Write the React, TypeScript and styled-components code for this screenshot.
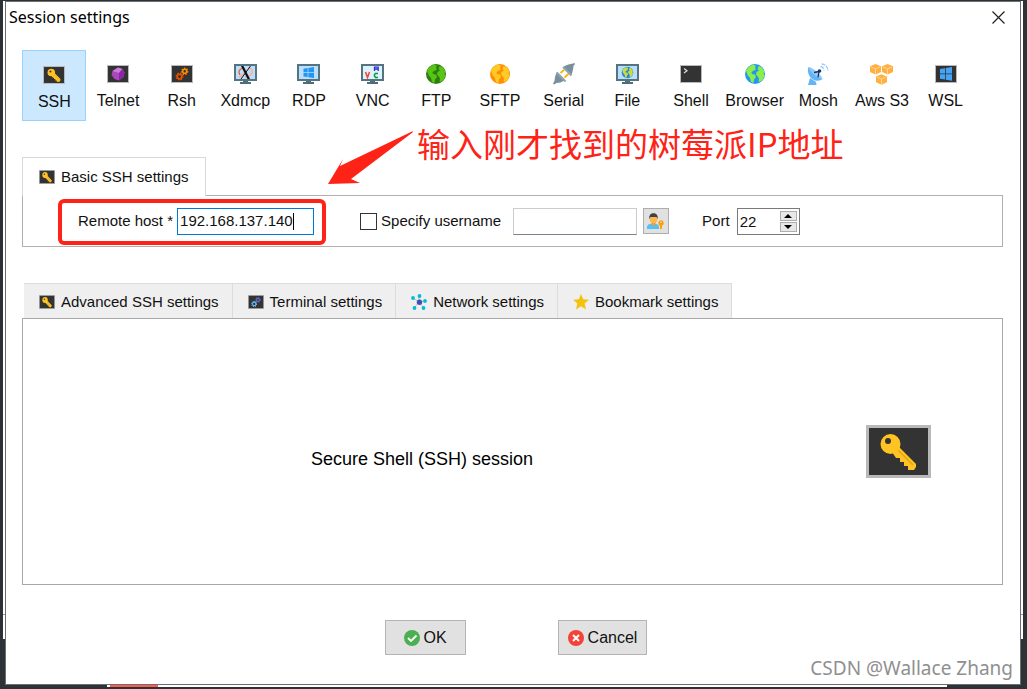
import React from 'react';
import styled, { createGlobalStyle } from 'styled-components';

const Global = createGlobalStyle`
  *, *::before, *::after { box-sizing: border-box; }
  body { margin: 0; background: #2d3236; color: #111; font: 15px/20px "Liberation Sans", Arial, sans-serif; }
  button, input { font: inherit; color: inherit; margin: 0; padding: 0; border-radius: 0; }
  svg { display: block; flex: none; }
`;

/* ---------- icons ---------- */

type Size = { w?: number; h?: number };

const KeyIcon = ({ w = 22, h = 18 }: Size) => (
  <svg width={w} height={h} viewBox="0 0 65 53" preserveAspectRatio="none">
    <rect width="65" height="53" fill="#b9b9b9" />
    <rect x="3" y="3" width="59" height="47" fill="#333" />
    <path d="M33 22L50 39V42L48 45H42V41H38V37H34V33H30L26 27Z" fill="#ffc423" stroke="#ffc423" strokeWidth={w < 30 ? 3 : 0} />
    <path d="M32 25l15 15" stroke="#e3a614" strokeWidth="1.500" />
    <circle cx="24.500" cy="19" r={w < 30 ? 11 : 10} fill="#ffc423" />
    <circle cx="22" cy="16" r="3" fill="#333" />
  </svg>
);

const Screen = ({ children, w = 22, h = 18 }: Size & { children?: React.ReactNode }) => (
  <svg width={w} height={h} viewBox="0 0 22 18" preserveAspectRatio="none">
    <rect width="22" height="18" fill="#b9b9b9" />
    <rect x="1" y="1" width="20" height="16" fill="#333" />
    {children}
  </svg>
);

const Monitor = ({ children }: { children: React.ReactNode }) => (
  <svg width="23" height="20" viewBox="0 0 23 20">
    <path d="M9 16h5v2h3v2H6v-2h3z" fill="#4f6d7a" />
    <rect width="23" height="17" fill="#557481" />
    <rect x="2" y="2" width="19" height="13" fill="#bbdefb" />
    {children}
  </svg>
);

const Land = ({ fill }: { fill: string }) => (
  <path
    fill={fill}
    d="M1 6.500C2.500 3.500 5 1.500 8 .8l3 1-1 2 1 1.700-3 1.500-1.500 1.300.5 1.700 3 .5 1 2.500-2 2.500-.5 3.500-2.500-1-1-4-2.500-3zM13.500 2l3 1 3 4.500-1 1.500 1 3-2 4-3 2-1-.8.500-3-1.500-2-1.500-1.700.5-2.500 2.500-1.500-1.500-1.500z"
  />
);

const Globe = ({ sea, land }: { sea: string; land: string }) => (
  <svg width="20" height="20" viewBox="0 0 20 20">
    <circle cx="10" cy="10" r="10" fill={sea} />
    <Land fill={land} />
  </svg>
);

const Gear = ({ cx, cy, r, color }: { cx: number; cy: number; r: number; color: string }) => (
  <g fill="none" stroke={color}>
    <circle cx={cx} cy={cy} r={r} strokeWidth="1.600" />
    <circle cx={cx} cy={cy} r={r + 1} strokeWidth="1.400" strokeDasharray="1.400 1.200" />
  </g>
);

const GearsIcon = ({ big, small, w, h }: Size & { big: string; small: string }) => (
  <Screen w={w} h={h}>
    <Gear cx={8.5} cy={11.5} r={2.3} color={big} />
    <Gear cx={13.7} cy={6.3} r={2} color={small} />
  </Screen>
);

const TelnetIcon = () => (
  <Screen>
    <path d="M11 2.500l4.500 1.500 2 3.500-1 4.500-4.500 3.500-4.500-1.500L4.500 10l1-4z" fill="#ab47bc" />
    <path d="M11 2.500l4.500 1.500-3.500 4-6.500-2z" fill="#c77dd6" />
    <path d="M15.500 4l2 3.500-1 4.500-4.500 3.500V8z" fill="#8e24aa" />
  </Screen>
);

const XIcon = () => (
  <Monitor>
    <path d="M14 4c4 0 5 2 4 5s-5 4-7 4M5 13c2 0 5-4 8-7" stroke="#ffab91" strokeWidth="1.500" fill="none" />
    <path d="M9 4C5 5 4 8 6 11" stroke="#f4511e" strokeWidth="1.200" fill="none" />
    <path d="M7 2h2.500l6.500 13h-2.500z" fill="#111" />
    <path d="M16.500 2L7 15" stroke="#111" strokeWidth="1" />
  </Monitor>
);

const RdpIcon = () => (
  <Monitor>
    <path d="M6.500 4.700l4.200-.7v4.200H6.500zM11.400 3.900L17 3v5.200h-5.600zM6.500 8.900h4.200v4.200l-4.200-.7zM11.400 8.900H17V14l-5.600-.8z" fill="#2196f3" />
  </Monitor>
);

const VncIcon = () => (
  <Monitor>
    <rect x="2" y="2" width="19" height="13" fill="#e1f0fd" />
    <path d="M4.500 8l2 5.500 2-5.500" stroke="#f44336" strokeWidth="1.500" fill="none" />
    <path d="M13.500 7V3.200h3.700V7M13.500 5h3.700" stroke="#3030e0" strokeWidth="1.300" fill="none" />
    <path d="M17 9.500h-2.500l-1 1v1.500l1 1.500H17" stroke="#00a030" strokeWidth="1.500" fill="none" />
  </Monitor>
);

const FileIcon = () => (
  <Monitor>
    <circle cx="11.500" cy="8.500" r="5.800" fill="#1e88e5" />
    <g transform="translate(5.700 2.700) scale(.58)"><Land fill="#cddc39" /></g>
  </Monitor>
);

const SerialIcon = () => (
  <svg width="22" height="22" viewBox="0 0 22 22">
    <path d="M7.500 10l3.500-3M11.500 14.500l4-3.500" stroke="#ffb300" strokeWidth="1.800" />
    <path d="M10 5l1.500-2 4-1.500L20 .5l1.500-.5.5 1-1.500 2-.5 3.500-1 4-1.500 1.500z" fill="#78909c" />
    <path d="M4.500 9L3 11l-1 3-.5 4L0 20.500l1 1 2.500-1.500 4-.5 3-1.500 1.500-1.500z" fill="#78909c" />
    <path d="M10 4l8.500 8.500M3.500 9.500l9 9" stroke="#90a4ae" strokeWidth="2" />
  </svg>
);

const ShellIcon = () => (
  <Screen>
    <path d="M4 3.500l3 2.200-3 2.200" stroke="#ddd" strokeWidth="1.200" fill="none" />
  </Screen>
);

const MoshIcon = () => (
  <svg width="22" height="22" viewBox="0 0 22 22">
    <path d="M3 15l6 4 .5 3H1z" fill="#64b5f6" />
    <path d="M1.500 4C-.5 9 2.500 16 8 17.500c3.500.8 6.500-.5 7.500-1.500z" fill="#64b5f6" />
    <path d="M1.500 4C5 4 15 12 15.500 16 12 17 3 9 1.500 4z" fill="#90caf9" />
    <path d="M12 8.500L7 9.500M12 8.500l-1 6" stroke="#1a3468" strokeWidth="1.300" />
    <circle cx="12.500" cy="8" r="1.800" fill="#1a3468" />
    <path d="M13.500 3.500c2 .2 3.500 2 3.500 4M14.500.8c4 .4 6.500 3.400 6.500 7.200" stroke="#90caf9" strokeWidth="1.300" strokeDasharray="4 1" fill="none" />
  </svg>
);

const Cube = ({ x, y }: { x: number; y: number }) => (
  <g transform={`translate(${x} ${y})`}>
    <path d="M5.500 0L11 2.300V8l-5.500 2.600L0 8V2.300z" fill="#ffb040" />
    <path d="M1 2.900l4.500 2 4.500-2M5.500 4.900V10" stroke="#ffe0b2" strokeWidth=".8" fill="none" />
  </g>
);

const AwsIcon = () => (
  <svg width="23" height="21" viewBox="0 0 23 21">
    <Cube x={0} y={0} />
    <Cube x={12} y={0} />
    <Cube x={6} y={10.2} />
  </svg>
);

const WslIcon = () => (
  <Screen>
    <path d="M5 4l5-.8v5.300H5zM10.800 3l6.200-.9v6.400h-6.200zM5 9.300h5v5.300l-5-.8zM10.800 9.300H17v6.500l-6.200-1z" fill="#42a5f5" />
  </Screen>
);

const NetworkIcon = () => (
  <svg width="16" height="16" viewBox="0 0 16 16">
    <path d="M8 8L2 4M8 8V2M8 8l6-1M8 8l5 6M8 8l-5 6" stroke="#b0bec5" strokeWidth="1" />
    <g fill="#00bcd4">
      <circle cx="2" cy="4" r="1.900" /><circle cx="8.500" cy="2" r="1.900" /><circle cx="14" cy="7" r="1.900" />
      <circle cx="12.500" cy="14" r="1.900" /><circle cx="3.500" cy="14" r="1.900" />
    </g>
    <circle cx="8.500" cy="8.300" r="2.700" fill="#3f51b5" />
  </svg>
);

const StarIcon = () => (
  <svg width="16" height="16" viewBox="0 0 16 16">
    <path d="M8 0l2.200 5.300 5.800.5-4.400 3.800L13 15.500l-5-3.200-5 3.200 1.400-5.900L0 5.800l5.800-.5z" fill="#f4c20d" />
  </svg>
);

const UserKeyIcon = () => (
  <svg width="18" height="17" viewBox="0 0 18 17">
    <path d="M0 16v-2c0-2.500 3-3.500 6-3.500s6 1 6 3.500v2z" fill="#4fc3f7" />
    <path d="M4.500 8.500h4V12l-2 1-2-1z" fill="#f09a3a" />
    <ellipse cx="6.500" cy="6" rx="3.800" ry="4.300" fill="#ffb74d" />
    <path d="M2.300 6C1.800 2 4 .3 6.500.3S11.200 2 10.700 6L9.500 4h-6z" fill="#424242" />
    <path d="M14 7.300a2.800 2.800 0 0 1 1 5.400V16h-2v-3.300a2.800 2.800 0 0 1 1-5.400z" fill="#ffa000" />
    <circle cx="14" cy="9.300" r=".8" fill="#e1e1e1" />
  </svg>
);

const OkIcon = () => (
  <svg width="16" height="16" viewBox="0 0 16 16">
    <circle cx="8" cy="8" r="8" fill="#4caf50" />
    <path d="M4 8l3 3 5.500-5.500" stroke="#fff" strokeWidth="1.800" fill="none" />
  </svg>
);

const CancelIcon = () => (
  <svg width="16" height="16" viewBox="0 0 16 16">
    <circle cx="8" cy="8" r="8" fill="#f44336" />
    <path d="M5 5l6 6M11 5l-6 6" stroke="#fff" strokeWidth="2" />
  </svg>
);

/* ---------- layout ---------- */

const Desktop = styled.div`
  position: relative;
  min-height: 100vh;
  padding: 1px 6px 4px 5px;
  background: #2d3236;
`;

const BackWindow = styled.div`
  position: absolute;
  inset: 1px 4px 50px 3px;
  background: #fff;
`;

const BackRule = styled.div`
  position: absolute;
  left: 0;
  right: 0;
  bottom: 24px;
  border-top: 1px solid #999;
`;

const BackStrip = styled.div`
  position: absolute;
  left: 107px;
  right: 80px;
  bottom: 2px;
  height: 2px;
  background: #fff;
`;

const BackMark = styled.div`
  width: 48px;
  height: 2px;
  margin-left: 3px;
  background: #ff5a4f;
`;

const Dialog = styled.main`
  position: relative;
  min-height: calc(100vh - 5px);
  padding: 0 17px 28px 16px;
  background: #fff;
  border: 1px solid #6c6f72;
`;

const TitleBar = styled.header`
  display: flex;
  align-items: center;
  justify-content: space-between;
  height: 30px;
  margin: 0 -8px 18px -13px;
`;

const Title = styled.h1`
  margin: 0;
  color: #000;
  font: 400 16px/20px "Noto Sans", "Open Sans", sans-serif;
`;

const CloseButton = styled.button`
  display: grid;
  place-items: center;
  width: 26px;
  height: 26px;
  border: 0;
  background: none;
`;

const Toolbar = styled.nav`
  display: grid;
  grid-template-columns: repeat(15, 1fr);
  padding-right: 26px;
`;

const SessionButton = styled.button<{ $active?: boolean }>`
  display: flex;
  flex-direction: column;
  align-items: center;
  height: 71px;
  padding: ${(p) => (p.$active ? 13 : 12)}px 0 0 1px;
  border: 1px solid ${(p) => (p.$active ? '#99d1ff' : 'transparent')};
  background: ${(p) => (p.$active ? '#cce8ff' : 'transparent')};
  font-size: 16px;
  white-space: nowrap;
`;

const IconSlot = styled.span`
  display: grid;
  place-items: center;
  height: 22px;
  margin-bottom: 6px;
`;

const BasicTab = styled.button`
  position: relative;
  display: flex;
  align-items: center;
  gap: 6px;
  height: 39px;
  margin: 36px 0 -1px;
  padding: 0 16px;
  border: 1px solid #d9d9d9;
  border-bottom: 0;
  background: #fff;
`;

const BasicPanel = styled.section`
  display: flex;
  align-items: center;
  height: 52px;
  padding-left: 55px;
  border: 1px solid #b0b0b0;
`;

const HostField = styled.div`
  position: relative;
  display: flex;
  align-items: center;
  gap: 4px;
  margin-right: 46px;
`;

const HostInput = styled.input`
  width: 137px;
  height: 27px;
  padding: 0 2px 2px;
  border: 1px solid #0078d7;
  background: #fff;
  outline: 0;
`;

const Caret = styled.span`
  position: absolute;
  right: 20px;
  top: 5px;
  width: 1px;
  height: 17px;
  background: #000;
`;

const Highlight = styled.span`
  position: absolute;
  inset: -9px -12px -10px -20px;
  border: 4px solid #ff2216;
  border-radius: 6px;
  pointer-events: none;
`;

const UserLabel = styled.label`
  display: flex;
  align-items: center;
  gap: 4px;
  margin-right: 12px;
`;

const Checkbox = styled.input`
  appearance: none;
  width: 17px;
  height: 17px;
  border: 1px solid #333;
  background: #fff;
`;

const UserInput = styled.input`
  width: 124px;
  height: 27px;
  border: 1px solid #ccc;
  border-bottom-color: #7a848c;
  background: #fff;
`;

const UserButton = styled.button`
  display: grid;
  place-items: center;
  width: 26px;
  height: 26px;
  margin: 0 33px 0 6px;
  border: 1px solid #adadad;
  background: #e1e1e1;
`;

const Spinner = styled.div`
  display: flex;
  align-items: center;
  width: 63px;
  height: 27px;
  margin-left: 7px;
  padding: 0 2px;
  border: 1px solid #7a7a7a;
`;

const PortInput = styled.input`
  flex: 1;
  min-width: 0;
  height: 24px;
  border: 0;
  background: none;
`;

const Steps = styled.div`
  display: grid;
  gap: 1px;
`;

const Step = styled.button`
  display: grid;
  place-items: center;
  width: 17px;
  height: 10px;
  border: 1px solid #adadad;
  background: #e8e8e8;
`;

const Tabs = styled.div`
  display: flex;
  margin: 36px 0 0 2px;
`;

const Tab = styled.button`
  display: flex;
  align-items: center;
  gap: 6px;
  height: 35px;
  padding: 1px 13px 0 15px;
  border: 1px solid #dcdcdc;
  border-width: 1px 1px 0 0;
  background: #efefef;
  white-space: nowrap;
`;

const SessionPanel = styled.section`
  display: flex;
  align-items: center;
  height: 267px;
  padding-right: 71px;
  border: 1px solid #a8a8a8;
`;

const SessionName = styled.p`
  flex: 1;
  margin: 0;
  padding: 14px 45px 0 0;
  text-align: center;
  color: #000;
  font-size: 18px;
`;

const Actions = styled.footer`
  display: flex;
  justify-content: center;
  gap: 92px;
  margin: 35px 0 0 7px;
`;

const ActionButton = styled.button`
  display: flex;
  align-items: center;
  justify-content: center;
  gap: 4px;
  min-width: 81px;
  height: 35px;
  padding: 0 9px;
  border: 1px solid #b4b4b4;
  background: #e1e1e1;
  font-size: 16px;
`;

const Note = styled.div`
  position: absolute;
  left: 322px;
  top: 117px;
  display: flex;
  align-items: flex-start;
  color: #ff2216;
  pointer-events: none;
`;

const NoteText = styled.span`
  margin-left: 3px;
  font: 400 33px/48px "Noto Sans CJK SC", sans-serif;
  white-space: nowrap;
`;

const Watermark = styled.div`
  position: absolute;
  right: 7px;
  bottom: 4px;
  color: #8f8f8f;
  font: 400 19px/24px "Noto Sans", sans-serif;
`;

const sessions: { name: string; icon: React.ReactNode }[] = [
  { name: 'SSH', icon: <KeyIcon /> },
  { name: 'Telnet', icon: <TelnetIcon /> },
  { name: 'Rsh', icon: <GearsIcon big="#e65100" small="#fb8c00" /> },
  { name: 'Xdmcp', icon: <XIcon /> },
  { name: 'RDP', icon: <RdpIcon /> },
  { name: 'VNC', icon: <VncIcon /> },
  { name: 'FTP', icon: <Globe sea="#2e7d0e" land="#56c516" /> },
  { name: 'SFTP', icon: <Globe sea="#ff8f00" land="#ffc928" /> },
  { name: 'Serial', icon: <SerialIcon /> },
  { name: 'File', icon: <FileIcon /> },
  { name: 'Shell', icon: <ShellIcon /> },
  { name: 'Browser', icon: <Globe sea="#2196f3" land="#8bee4a" /> },
  { name: 'Mosh', icon: <MoshIcon /> },
  { name: 'Aws S3', icon: <AwsIcon /> },
  { name: 'WSL', icon: <WslIcon /> },
];

const tabs: { name: string; icon: React.ReactNode }[] = [
  { name: 'Advanced SSH settings', icon: <KeyIcon w={16} h={14} /> },
  { name: 'Terminal settings', icon: <GearsIcon big="#64b5f6" small="#5c6bc0" w={16} h={14} /> },
  { name: 'Network settings', icon: <NetworkIcon /> },
  { name: 'Bookmark settings', icon: <StarIcon /> },
];

export default function App() {
  return (
    <Desktop>
      <Global />
      <BackWindow><BackRule /></BackWindow>
      <BackStrip><BackMark /></BackStrip>
      <Dialog>
        <TitleBar>
          <Title>Session settings</Title>
          <CloseButton aria-label="Close">
            <svg width="13" height="13" viewBox="0 0 13 13"><path d="M.5.5l12 12M12.500.5l-12 12" stroke="#222" strokeWidth="1.200" /></svg>
          </CloseButton>
        </TitleBar>

        <Toolbar>
          {sessions.map((s, i) => (
            <SessionButton key={s.name} $active={i === 0}>
              <IconSlot>{s.icon}</IconSlot>
              {s.name}
            </SessionButton>
          ))}
        </Toolbar>

        <BasicTab><KeyIcon w={16} h={14} />Basic SSH settings</BasicTab>
        <BasicPanel>
          <HostField>
            <label htmlFor="host">Remote host *</label>
            <HostInput id="host" defaultValue="192.168.137.140" />
            <Caret />
            <Highlight />
          </HostField>
          <UserLabel><Checkbox type="checkbox" />Specify username</UserLabel>
          <UserInput aria-label="Username" />
          <UserButton aria-label="Saved users"><UserKeyIcon /></UserButton>
          <label htmlFor="port">Port</label>
          <Spinner>
            <PortInput id="port" defaultValue="22" />
            <Steps>
              <Step aria-label="Increase port"><svg width="8" height="4" viewBox="0 0 8 4"><path d="M0 4l4-4 4 4z" /></svg></Step>
              <Step aria-label="Decrease port"><svg width="8" height="4" viewBox="0 0 8 4"><path d="M0 0l4 4 4-4z" /></svg></Step>
            </Steps>
          </Spinner>
        </BasicPanel>

        <Tabs>
          {tabs.map((t) => (
            <Tab key={t.name}>{t.icon}{t.name}</Tab>
          ))}
        </Tabs>
        <SessionPanel>
          <SessionName>Secure Shell (SSH) session</SessionName>
          <KeyIcon w={65} h={53} />
        </SessionPanel>

        <Actions>
          <ActionButton><OkIcon />OK</ActionButton>
          <ActionButton><CancelIcon />Cancel</ActionButton>
        </Actions>

        <Note>
          <svg width="86" height="68" viewBox="0 0 86 68">
            <path d="M84.500 13.500Q86 12 84 12.500L12 47l3-7L0 65l32-1-9-4z" fill="#ff2216" />
          </svg>
          <NoteText>输入刚才找到的树莓派IP地址</NoteText>
        </Note>
        <Watermark>CSDN @Wallace Zhang</Watermark>
      </Dialog>
    </Desktop>
  );
}
